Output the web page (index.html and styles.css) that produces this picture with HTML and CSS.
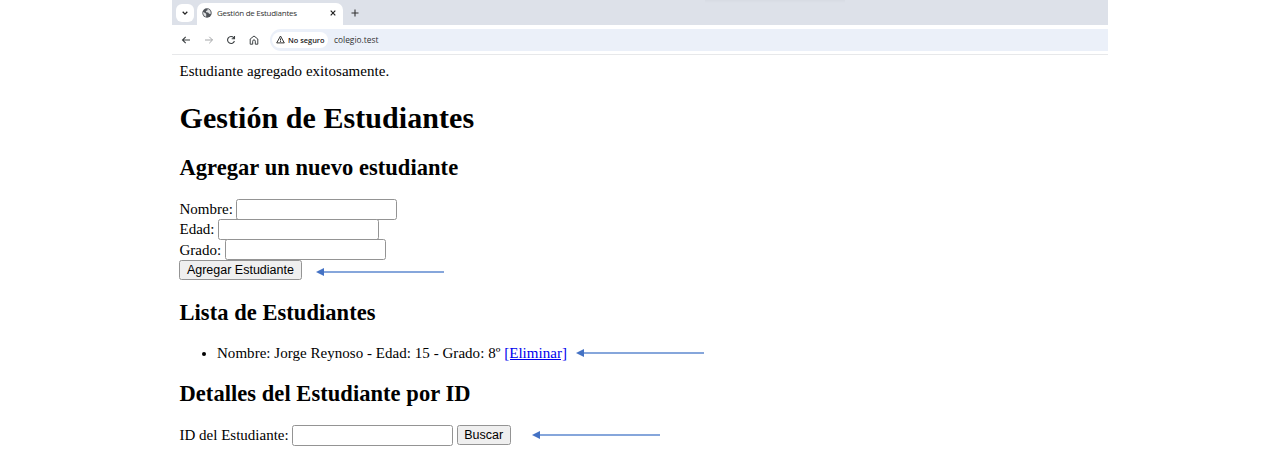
FILE: index.html
```html
<!DOCTYPE html>
<html lang="es">
<head>
<meta charset="utf-8">
<title>Gestión de Estudiantes</title>
<link rel="stylesheet" href="styles.css">
</head>
<body>
<div class="browser">
  <div class="tabs">
    <div class="tab-search"><svg width="8" height="8" viewBox="0 0 8 8"><path d="M1.7 2.8 4 5.1 6.3 2.8" fill="none" stroke="#222" stroke-width="1.3"/></svg></div>
    <div class="tab">
      <svg class="globe" width="10" height="10" viewBox="0 0 10 10"><circle cx="5" cy="5" r="4.7" fill="#505459"/><path d="M1.1 4.1 3.6 5.3 4.3 6.5 4.1 8.8C2 8.4 1 6.5 1.1 4.1ZM5.7 1 5.3 2.4 3.9 2.9 4.2 4.2 6.1 4.4 7.1 5.8 8.5 6.1C9.3 4 8 1.5 5.7 1Z" fill="#dfe1e3"/></svg>
      <span class="tab-title">Gestión de Estudiantes</span>
      <svg class="close" width="6" height="6" viewBox="0 0 6 6"><path d="M.7.7 5.3 5.3M5.3.7.7 5.3" stroke="#222" stroke-width="1.2"/></svg>
    </div>
    <svg class="plus" width="8" height="8" viewBox="0 0 8 8"><path d="M4 .5V7.5M.5 4H7.5" stroke="#333" stroke-width="1.1"/></svg>
  </div>
  <div class="toolbar">
    <div class="nav">
      <svg width="10" height="10" viewBox="0 0 10 10" fill="none" stroke="#3c4043" stroke-width="1.1"><path d="M9 5H1.5M4.7 1.8 1.5 5 4.7 8.2"/></svg>
      <svg width="10" height="10" viewBox="0 0 10 10" fill="none" stroke="#a4a6a8" stroke-width="1"><path d="M1 5H8.5M5.3 1.8 8.5 5 5.3 8.2"/></svg>
      <svg width="10" height="10" viewBox="0 0 10 10" fill="none" stroke="#3c4043" stroke-width="1.1"><path d="M8.4 6A3.5 3.5 0 1 1 7.7 2.7L8.5 3.6M8.5 1V3.8H5.7"/></svg>
      <svg width="10" height="10" viewBox="0 0 10 10" fill="none" stroke="#3c4043" stroke-width="1"><path d="M1.2 4 5 1 8.8 4V9.2H6.3V6.2A1.3 1.3 0 0 0 3.7 6.2V9.2H1.2Z"/></svg>
    </div>
    <div class="address">
      <div class="security"><svg width="9" height="9" viewBox="0 0 9 9" fill="none" stroke="#333" stroke-width="1"><path d="M4.5 1 8.3 7.9H.7ZM4.5 3.5V5.5M4.5 6.1V7"/></svg><span class="security-text">No seguro</span></div>
      <span class="url">colegio.test</span>
    </div>
  </div>
  <main class="page">
    <p class="message"><span>Estudiante agregado exitosamente.</span></p>
    <h1 class="title">Gestión de Estudiantes</h1>
    <h2 class="heading heading-add">Agregar un nuevo estudiante</h2>
    <form class="form">
      <label class="row">Nombre: <input class="field" type="text"></label>
      <label class="row">Edad: <input class="field" type="text"></label>
      <label class="row">Grado: <input class="field" type="text"></label>
      <div class="row"><button class="button button-add" type="button">Agregar Estudiante</button><svg class="arrow arrow-add" width="128" height="8" viewBox="0 0 128 8"><path d="M7 4H128" stroke="#5e88cf" stroke-width="1.3"/><path d="M0 4 8 0V8Z" fill="#4472c4"/></svg></div>
    </form>
    <h2 class="heading heading-list">Lista de Estudiantes</h2>
    <ul class="list">
      <li class="item"><span>Nombre: Jorge Reynoso - Edad: 15 - Grado: 8º <a class="link" href="#">[Eliminar]</a></span><svg class="arrow arrow-list" width="128" height="8" viewBox="0 0 128 8"><path d="M7 4H128" stroke="#5e88cf" stroke-width="1.3"/><path d="M0 4 8 0V8Z" fill="#4472c4"/></svg></li>
    </ul>
    <h2 class="heading heading-detail">Detalles del Estudiante por ID</h2>
    <div class="row">ID del Estudiante: <input class="field" type="text"><button class="button button-search" type="button">Buscar</button><svg class="arrow arrow-search" width="128" height="8" viewBox="0 0 128 8"><path d="M7 4H128" stroke="#5e88cf" stroke-width="1.3"/><path d="M0 4 8 0V8Z" fill="#4472c4"/></svg></div>
  </main>
</div>
</body>
</html>
```
FILE: styles.css
```css
* { box-sizing: border-box; }
body { margin: 0; background: #fff; color: #000; overflow: hidden; }
svg { display: block; flex: none; }
.browser { width: 936px; height: 454px; margin-left: 172px; font-family: "Open Sans", sans-serif; }
.tabs { height: 25px; display: flex; align-items: center; background: linear-gradient(#d7dbe3, #dde1e9) 533px 0 / 140px 3px no-repeat, #dde1e9; }
.tab-search { width: 18px; height: 18px; margin-left: 4px; border-radius: 6px; background: #fff; display: flex; align-items: center; justify-content: center; }
.tab { width: 146px; height: 22px; margin: 3px 0 0 3px; padding: 0 7px 3px 5px; border-radius: 7px 7px 0 0; background: #fff; display: flex; align-items: center; }
.tab-title { margin-left: 5px; font-family: "Open Sans", sans-serif; font-size: 8px; letter-spacing: -0.36px; line-height: 12px; color: #333; white-space: nowrap; }
.tab-title { letter-spacing: -0.27px; }
.close { margin-left: auto; }
.plus { margin-left: 8px; }
.toolbar { height: 30px; display: flex; align-items: center; border-bottom: 1px solid #e7e8ea; }
.nav { width: 98px; padding-left: 9px; display: flex; gap: 12.6px; }
.address { flex: 1; height: 22px; padding-left: 2px; border-radius: 11px 0 0 11px; background: #ebf0f9; display: flex; align-items: center; }
.security { width: 56px; height: 16px; padding-left: 4px; border-radius: 8px; background: #fff; display: flex; align-items: center; gap: 3px; }
.security-text { font-size: 7.4px; font-weight: 600; color: #222; white-space: nowrap; }
.url { margin-left: 6px; font-size: 8.4px; color: #333; }
.page { padding: 6px 0 0 7.5px; font-family: "Liberation Serif", serif; font-size: 15px; letter-spacing: 0.03px; line-height: 20px; }
.message { height: 20px; margin: 0; }
.title { margin: 19px 0 0; font-size: 30px; letter-spacing: 0.06px; line-height: 36px; }
.heading { margin: 0; font-size: 22.5px; letter-spacing: 0.05px; line-height: 26px; }
.heading-add { margin-top: 19px; }
.form { margin-top: 18px; }
.row { height: 20.25px; display: flex; align-items: center; white-space: nowrap; letter-spacing: 0; }
.field { width: 161px; height: 21px; margin: 0 0 0 3.5px; padding: 1px 2px; border: 1px solid #949494; border-radius: 2.5px; background: #fff; flex: none; }
.button { height: 20px; padding: 0; border: 1px solid #949494; border-radius: 2.5px; background: #efefef; color: #000; font: 12.5px/18px "Liberation Sans", sans-serif; flex: none; }
.button-add { width: 123px; margin-left: -0.6px; }
.button-search { width: 54px; margin-left: 3.5px; }
.heading-list { margin-top: 20px; }
.list { margin: 17px 0 0; padding: 0 0 0 37.5px; }
.item { height: 20px; letter-spacing: 0.035px; white-space: nowrap; }
.item > span { display: inline-block; }
.link { color: #00e; }
.heading-detail { margin-top: 18px; }
.heading-detail + .row { margin-top: 18px; }
.arrow-add { margin: 4px 0 0 14px; }
.arrow-list { display: inline-block; margin-left: 9.5px; vertical-align: 1px; }
.arrow-search { margin-left: 21px; }
```
